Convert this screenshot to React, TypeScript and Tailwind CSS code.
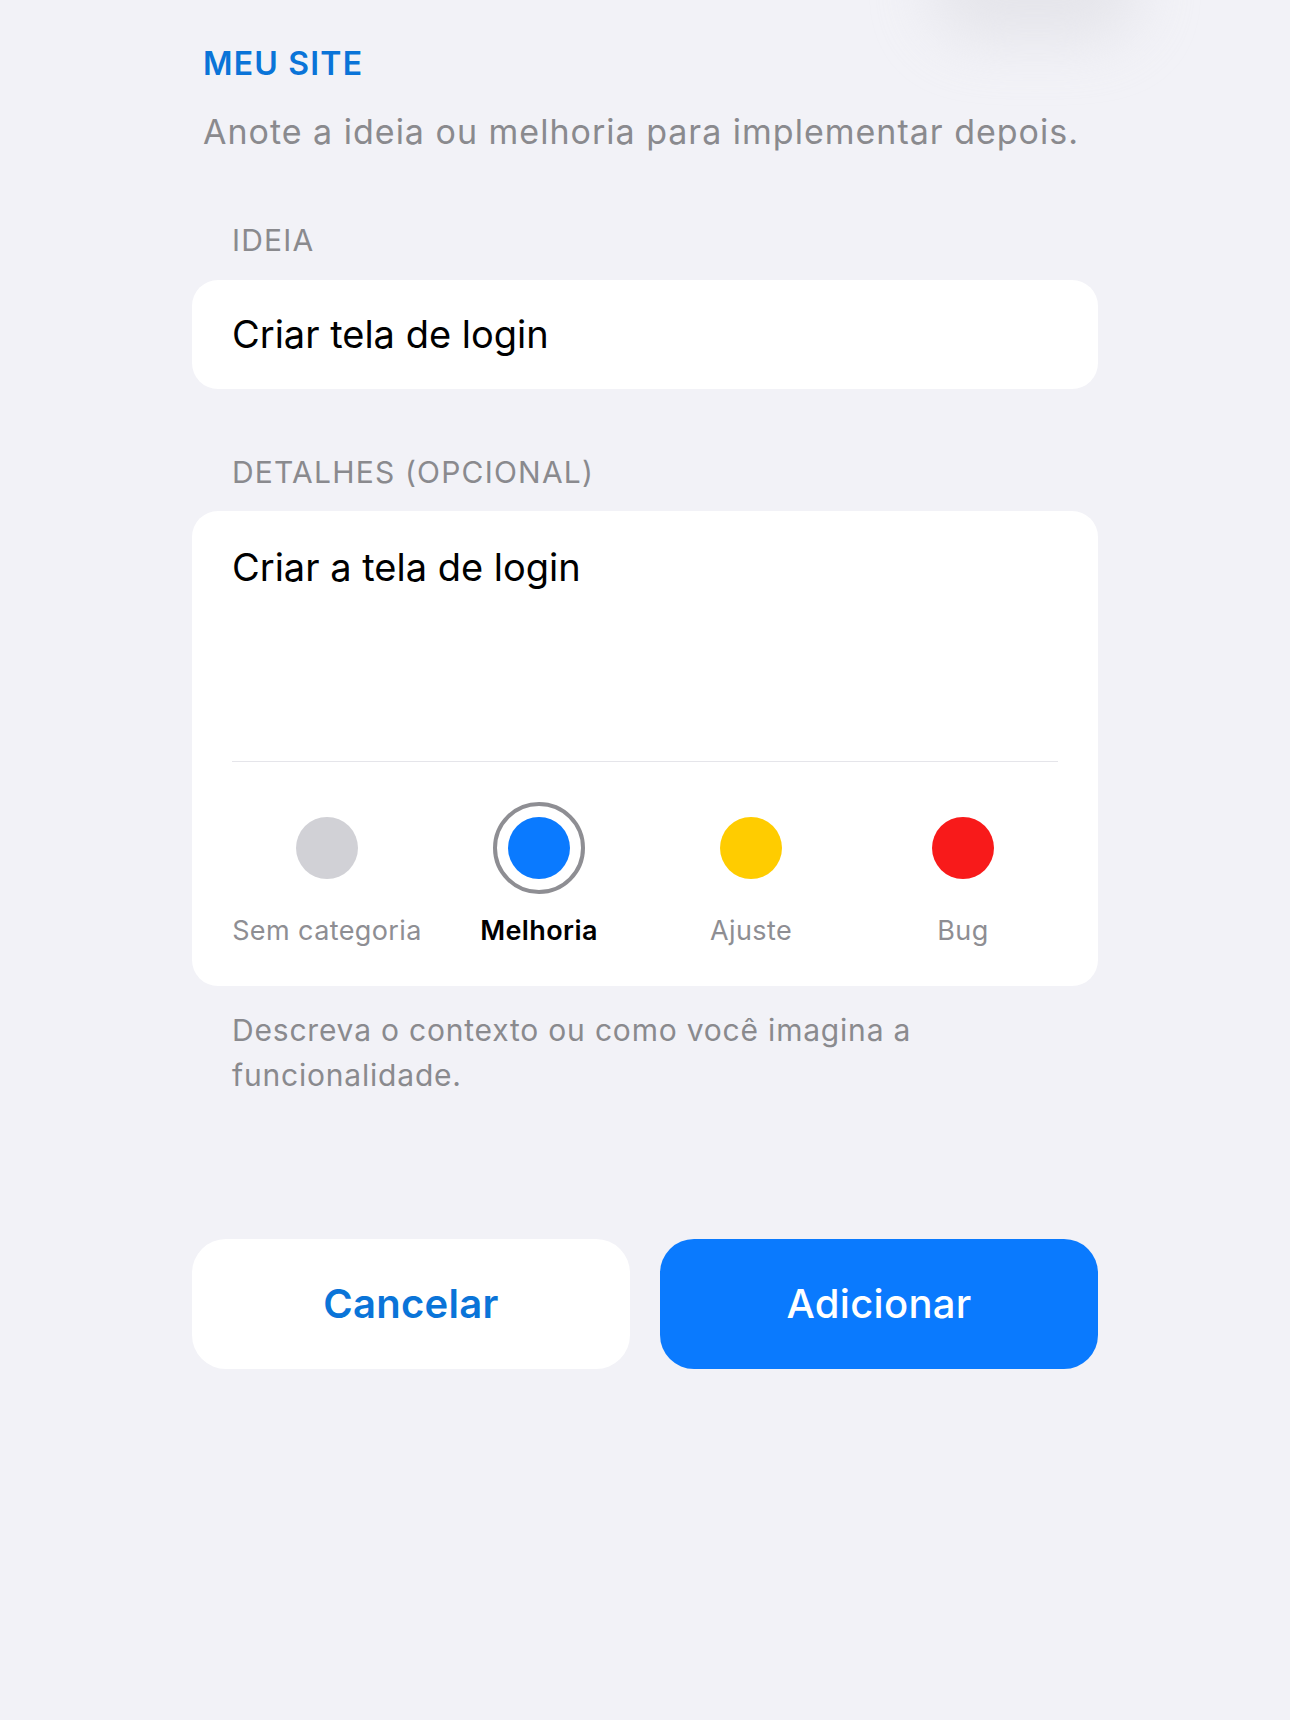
import React from "react";

const categories = [
  { label: "Sem categoria", color: "bg-[#d1d1d6]", selected: false },
  { label: "Melhoria", color: "bg-[#0a7aff]", selected: true },
  { label: "Ajuste", color: "bg-[#ffcc00]", selected: false },
  { label: "Bug", color: "bg-[#f81a1a]", selected: false },
];

export default function App() {
  return (
    <div
      className="relative min-h-[1720px] w-full overflow-hidden bg-[#f2f2f7]"
      style={{ fontFamily: "Inter, 'Noto Sans', sans-serif" }}
    >
      <div className="pointer-events-none absolute left-[930px] top-[-60px] h-[100px] w-[210px] rounded-full bg-[#dcdce2] opacity-60 blur-[30px]" />
      <div className="relative ml-[192px] w-[906px] pt-[44px]">
        <div className="h-[40px] pl-[11px] text-[32px] font-semibold leading-[40px] tracking-[1.2px] text-[#0a74d8]">
          MEU SITE
        </div>
        <div className="mt-[28px] h-[40px] whitespace-nowrap pl-[11px] text-[34px] leading-[40px] tracking-[1px] text-[#8a8a8e]">
          Anote a ideia ou melhoria para implementar depois.
        </div>

        <div className="mt-[70px] h-[36px] pl-[40px] text-[30px] leading-[36px] tracking-[1.2px] text-[#8a8a8e]">
          IDEIA
        </div>
        <div className="mt-[22px] flex h-[109px] items-center rounded-[26px] bg-white px-[40px]">
          <span className="text-[38px] text-black">Criar tela de login</span>
        </div>

        <div className="mt-[65px] h-[36px] pl-[40px] text-[30px] leading-[36px] tracking-[1.2px] text-[#8a8a8e]">
          DETALHES (OPCIONAL)
        </div>
        <div className="mt-[21px] rounded-[26px] bg-white pb-[38px] pt-[32px]">
          <div className="h-[218px] px-[40px] text-[38px] leading-[48px] text-black">
            Criar a tela de login
          </div>
          <div className="mx-[40px] h-px bg-[#e5e5ea]" />
          <div className="mx-[40px] mt-[40px] flex justify-between">
            {categories.map((c) => (
              <div key={c.label} className="flex w-[190px] flex-col items-center">
                <div
                  className={`flex h-[92px] w-[92px] items-center justify-center rounded-full ${
                    c.selected ? "border-[4px] border-[#8e8e93]" : ""
                  }`}
                >
                  <div className={`h-[62px] w-[62px] rounded-full ${c.color}`} />
                </div>
                <div
                  className={`mt-[20px] h-[34px] whitespace-nowrap text-[27px] leading-[34px] tracking-[0.4px] ${
                    c.selected ? "font-semibold text-black" : "text-[#8e8e93]"
                  }`}
                >
                  {c.label}
                </div>
              </div>
            ))}
          </div>
        </div>

        <div className="mt-[22px] px-[40px] text-[30px] leading-[45px] tracking-[0.8px] text-[#8a8a8e]">
          Descreva o contexto ou como você imagina a funcionalidade.
        </div>

        <div className="mt-[141px] flex gap-[30px]">
          <button className="flex h-[130px] flex-1 items-center justify-center rounded-[34px] bg-white text-[40px] font-semibold tracking-[0.3px] text-[#0a74d8]">
            Cancelar
          </button>
          <button className="flex h-[130px] flex-1 items-center justify-center rounded-[34px] bg-[#0a7afe] text-[40px] font-medium tracking-[0.3px] text-white">
            Adicionar
          </button>
        </div>
      </div>
    </div>
  );
}
